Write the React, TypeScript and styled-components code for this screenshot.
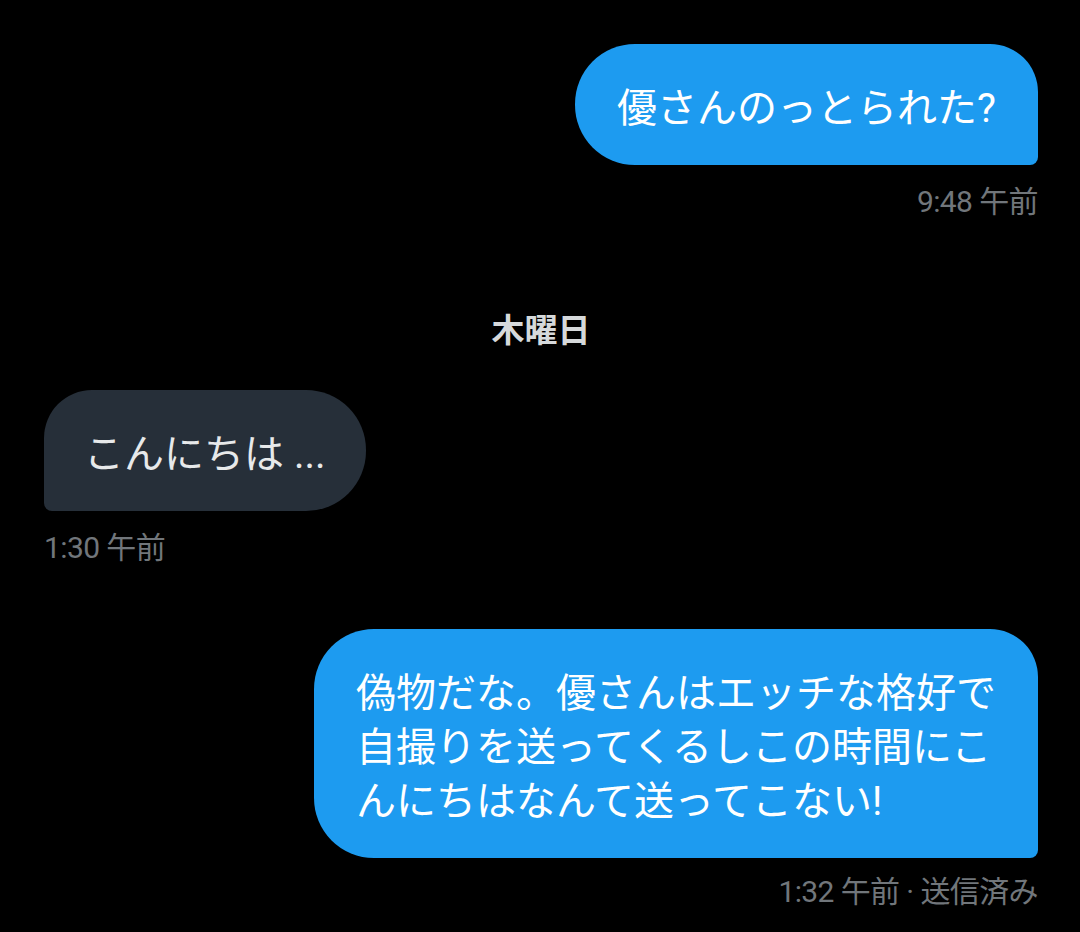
import React from "react";
import styled, { createGlobalStyle } from "styled-components";

const GlobalStyle = createGlobalStyle`
  html, body {
    margin: 0;
    padding: 0;
    background: #000;
  }
  body {
    font-family: Roboto, "Noto Sans CJK JP", sans-serif;
  }
`;

const Thread = styled.main`
  display: flex;
  flex-direction: column;
  min-height: 932px;
  padding: 44px 42px 0 44px;
  box-sizing: border-box;
  background: #000;
`;

const Group = styled.div<{ $sent?: boolean; $gap?: number }>`
  display: flex;
  flex-direction: column;
  align-items: ${(p) => (p.$sent ? "flex-end" : "flex-start")};
  margin-top: ${(p) => p.$gap ?? 0}px;
`;

const Bubble = styled.div<{ $sent?: boolean }>`
  box-sizing: border-box;
  max-width: 724px;
  padding: 38px ${(p) => (p.$sent ? 42 : 40)}px 29px;
  font-family: Roboto, "Noto Sans CJK JP", sans-serif;
  font-size: 40px;
  line-height: 54px;
  color: ${(p) => (p.$sent ? "#ffffff" : "#e7e9ea")};
  background: ${(p) => (p.$sent ? "#1d9bf0" : "#262f39")};
  border-radius: ${(p) => (p.$sent ? "60px 48px 8px 60px" : "48px 60px 60px 8px")};
  line-break: strict;
`;

const Meta = styled.div<{ $gap?: number }>`
  margin-top: ${(p) => p.$gap ?? 18}px;
  font-size: 30px;
  line-height: 38px;
  color: #71767b;
  letter-spacing: -0.6px;
`;

const DayLabel = styled.div`
  margin-top: 88px;
  text-align: center;
  font-size: 33px;
  line-height: 44px;
  font-weight: 700;
  color: #d6d9db;
`;

export default function App() {
  return (
    <>
      <GlobalStyle />
      <Thread>
        <Group $sent>
          <Bubble $sent>優さんのっとられた?</Bubble>
          <Meta>9:48 午前</Meta>
        </Group>

        <DayLabel>木曜日</DayLabel>

        <Group $gap={37}>
          <Bubble>こんにちは ...</Bubble>
          <Meta $gap={18}>1:30 午前</Meta>
        </Group>

        <Group $sent $gap={62}>
          <Bubble $sent>
            偽物だな。優さんはエッチな格好で自撮りを送ってくるしこの時間にこんにちはなんて送ってこない!
          </Bubble>
          <Meta $gap={15}>1:32 午前 · 送信済み</Meta>
        </Group>
      </Thread>
    </>
  );
}
